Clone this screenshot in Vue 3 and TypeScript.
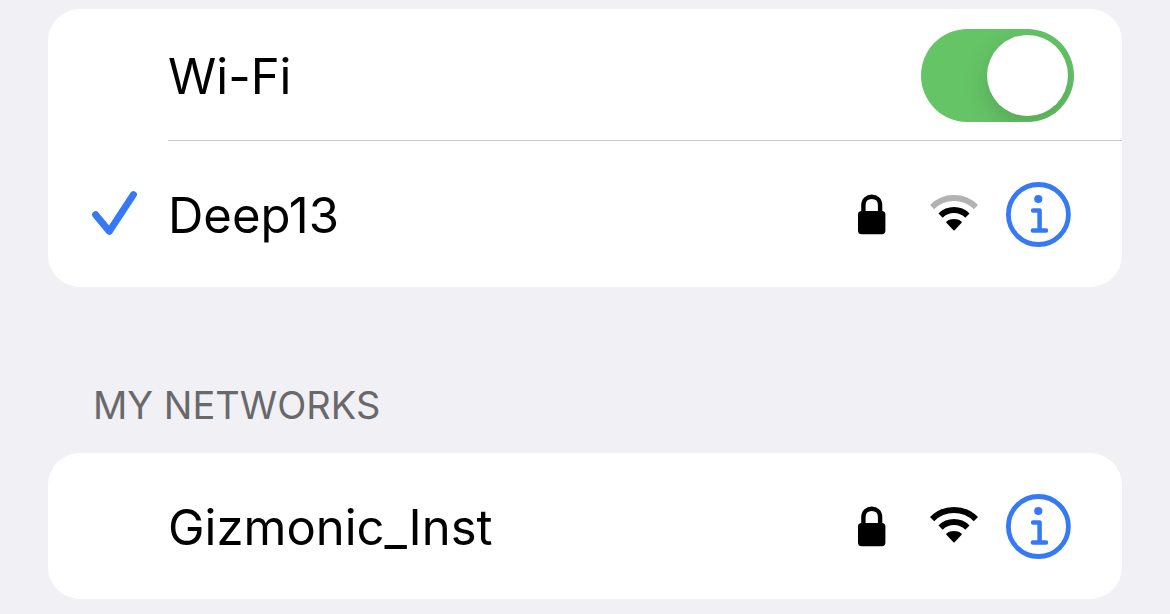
<script setup lang="ts">
import { ref } from 'vue'

interface Network {
  name: string
  bars: number
  connected: boolean
}

const wifiOn = ref(true)
const current: Network[] = [{ name: 'Deep13', bars: 2, connected: true }]
const known: Network[] = [{ name: 'Gizmonic_Inst', bars: 3, connected: false }]
const groups = [
  { id: 'current', title: '', toggle: true, networks: current },
  { id: 'known', title: 'MY NETWORKS', toggle: false, networks: known },
]
</script>

<template>
  <main class="settings">
    <section v-for="group in groups" :key="group.id" class="group">
      <h2 v-if="group.title" class="heading">{{ group.title }}</h2>
      <div class="card">
        <div v-if="group.toggle" class="row row-toggle">
          <div class="content divided">
            <label class="name" for="wifi-switch">Wi-Fi</label>
            <input id="wifi-switch" v-model="wifiOn" class="switch" type="checkbox" role="switch" />
          </div>
        </div>
        <div v-for="net in group.networks" :key="net.name" class="row">
          <div class="lead">
            <svg v-if="net.connected" class="check" viewBox="0 0 46 46" role="img" aria-label="Connected">
              <path d="M4.6 22.7 18.3 39.3 42.4 2.6" />
            </svg>
          </div>
          <div class="content">
            <span class="name">{{ net.name }}</span>
            <svg class="lock" viewBox="0 0 28 42" role="img" aria-label="Secured">
              <rect x="0" y="17" width="27.4" height="23.2" rx="3.6" />
              <path d="M5.4 19V11C5.4 6 9 2.7 13.8 2.7S22.1 6 22.1 11V19" />
            </svg>
            <svg class="signal" viewBox="0 0 48 40" role="img" aria-label="Signal strength">
              <path class="arc" :class="{ dim: net.bars < 3 }" d="M2.1 12.1A31 31 0 0 1 45.9 12.1" />
              <path class="arc" :class="{ dim: net.bars < 2 }" d="M10.6 20.6A19 19 0 0 1 37.4 20.6" />
              <path d="M16.4 27.7Q15.8 27.1 16.6 26.5C20.8 23.3 27.2 23.3 31.4 26.5Q32.2 27.1 31.6 27.7L24.6 35.2Q24 35.8 23.4 35.2Z" />
            </svg>
            <button class="info" type="button" :aria-label="`More about ${net.name}`">
              <svg viewBox="0 0 66 66" aria-hidden="true">
                <circle class="ring" cx="33.4" cy="32.5" r="30" />
                <circle class="dot" cx="33.3" cy="17" r="4.1" />
                <path class="stem" d="M28.1 28.4H34.6V48.4M27.9 48.4H41" />
              </svg>
            </button>
          </div>
        </div>
      </div>
    </section>
  </main>
</template>

<style>
body {
  margin: 0;
  background: #f1f0f5;
}
</style>

<style scoped>
.settings {
  display: flex;
  flex-direction: column;
  gap: 94px;
  padding: 9px 48px 15px;
  font-family: Inter, "Liberation Sans", sans-serif;
  color: #000;
}

.heading {
  margin: 0 0 24px;
  padding-left: 45px;
  font-size: 38px;
  font-weight: 400;
  line-height: 48px;
  color: #69696b;
}

.card {
  overflow: hidden;
  border-radius: 32px;
  background: #fff;
}

.row {
  display: flex;
  box-sizing: border-box;
  height: 146px;
  padding-top: 2px;
}

.row-toggle {
  height: 132px;
  padding-left: 120px;
}

.lead {
  display: flex;
  flex: 0 0 120px;
  align-items: center;
  box-sizing: border-box;
  padding-left: 43px;
}

.content {
  display: flex;
  flex: 1;
  align-items: center;
  min-width: 0;
  box-sizing: border-box;
  padding-right: 51px;
}

.divided {
  padding-right: 48px;
  border-bottom: 1px solid #c5c5c7;
}

.name {
  flex: 1;
  padding-top: 2px;
  font-size: 49px;
  line-height: 60px;
  white-space: nowrap;
}

.check {
  width: 46px;
  height: 46px;
  overflow: visible;
  fill: none;
  stroke: #3579f6;
  stroke-width: 7;
  stroke-linecap: round;
  stroke-linejoin: round;
}

.lock {
  width: 28px;
  height: 42px;
  margin-right: 44px;
}

.lock path {
  fill: none;
  stroke: #000;
  stroke-width: 4.4;
}

.signal {
  width: 48px;
  height: 40px;
  margin-right: 27px;
}

.arc {
  fill: none;
  stroke: #000;
  stroke-width: 6;
}

.dim {
  stroke: #b2b2b2;
}

.info {
  width: 66px;
  height: 66px;
  padding: 0;
  border: 0;
  background: none;
  cursor: pointer;
}

.info svg {
  display: block;
  width: 100%;
  height: 100%;
}

.ring {
  fill: none;
  stroke: #3579f6;
  stroke-width: 4.8;
}

.dot {
  fill: #3579f6;
}

.stem {
  fill: none;
  stroke: #3579f6;
  stroke-width: 4.5;
  stroke-linecap: round;
  stroke-linejoin: round;
}

.switch {
  display: flex;
  appearance: none;
  box-sizing: border-box;
  width: 153px;
  height: 93px;
  margin: 0;
  padding: 6px;
  overflow: hidden;
  border-radius: 47px;
  background: #e9e9ea;
  cursor: pointer;
}

.switch::before {
  content: "";
  width: 81px;
  height: 81px;
  border-radius: 50%;
  background: #fff;
  box-shadow: 0 9px 24px rgba(0, 0, 0, 0.15);
}

.switch:checked {
  justify-content: flex-end;
  background: #65c466;
}
</style>
